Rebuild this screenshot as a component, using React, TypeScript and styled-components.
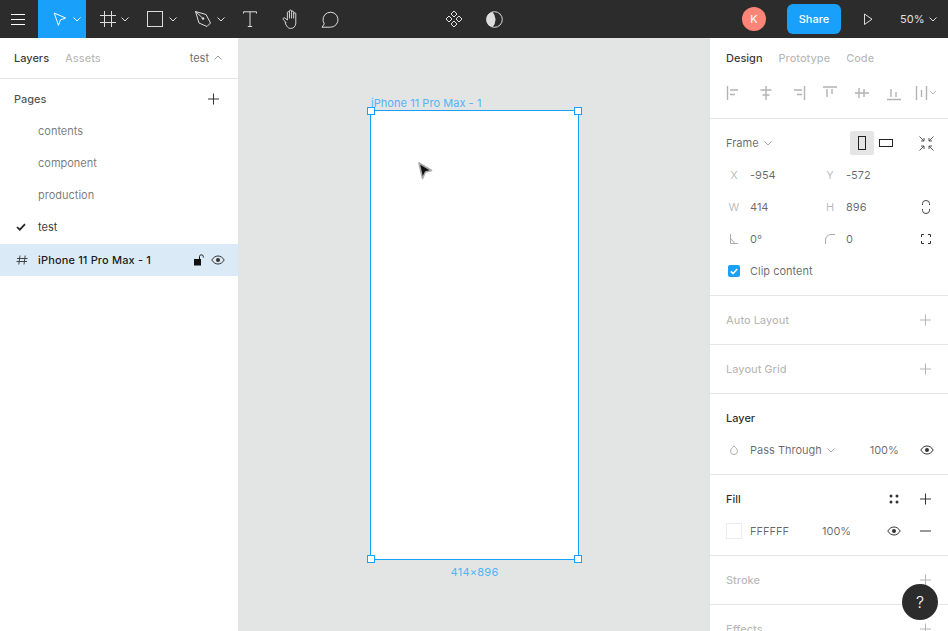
import React from "react";
import styled, { createGlobalStyle } from "styled-components";

const Global = createGlobalStyle`
  html, body { margin: 0; padding: 0; height: 100%; overflow: hidden; }
  body { font-family: Inter, "Liberation Sans", sans-serif; font-size: 11px; color: rgba(0,0,0,.8); }
  * { box-sizing: border-box; }
`;

const Page = styled.div`display:flex;flex-direction:column;width:948px;height:631px;overflow:hidden;position:relative;`;
const Toolbar = styled.header`display:flex;align-items:stretch;height:38px;flex:none;background:#2c2c2c;color:#fff;`;
const ToolSlot = styled.div<{ $w: number; $active?: boolean; $icon?: number; $gap?: number }>`
  width:${p => p.$w}px;flex:none;display:flex;align-items:center;justify-content:${p => (p.$icon ? "flex-start" : "center")};
  padding-left:${p => p.$icon ?? 0}px;gap:${p => p.$gap ?? 0}px;background:${p => (p.$active ? "#18a0fb" : "transparent")};
`;
const Spacer = styled.div<{ $w: number }>`width:${p => p.$w}px;flex:none;`;
const Avatar = styled.div`width:24px;height:24px;border-radius:50%;background:#fc8577;color:#fff;display:flex;align-items:center;justify-content:center;font-size:11px;align-self:center;`;
const ShareButton = styled.button`width:54px;height:30px;align-self:center;margin-left:21px;border:0;border-radius:6px;background:#18a0fb;color:#fff;font:500 11px Inter,sans-serif;padding:0;`;
const Zoom = styled.div`display:flex;align-items:center;gap:5px;color:#e0e0e0;font-size:11px;margin-left:5px;`;

const Body = styled.main`display:flex;flex:1;min-height:0;`;
const SidePanel = styled.aside`width:238px;flex:none;background:#fff;overflow:hidden;display:flex;flex-direction:column;`;
const Tabs = styled.div`display:flex;align-items:center;height:40px;flex:none;gap:16px;padding:0 16px 0 14px;`;
const LeftTabs = styled(Tabs)`height:41px;border-bottom:1px solid #e5e5e5;padding-bottom:1px;`;
const RightTabs = styled(Tabs)`padding-left:16px;`;
const Tab = styled.span<{ $on?: boolean }>`font-weight:500;color:${p => (p.$on ? "rgba(0,0,0,.8)" : "rgba(0,0,0,.3)")};`;
const PageName = styled.span`margin-left:auto;display:flex;align-items:center;gap:5px;color:rgba(0,0,0,.6);`;
const PagesHead = styled.div`display:flex;align-items:center;justify-content:space-between;height:24px;margin:8px 0 4px;padding:0 19px 0 14px;font-weight:500;color:rgba(0,0,0,.7);`;
const PageRow = styled.div<{ $current?: boolean }>`display:flex;align-items:center;height:32px;padding-left:16px;color:rgba(0,0,0,${p => (p.$current ? ".8" : ".55")});`;
const CheckSlot = styled.span`width:22px;flex:none;display:flex;align-items:center;`;
const LayerRow = styled.div`display:flex;align-items:center;height:32px;margin-top:1px;padding:0 13px 0 14px;background:#daebf7;font-weight:500;color:rgba(0,0,0,.9);`;
const LayerName = styled.span`margin-left:8px;flex:1;letter-spacing:.15px;`;
const LayerIcons = styled.span`display:flex;align-items:center;gap:7px;`;

const Canvas = styled.section`flex:1;background:#e3e5e4;position:relative;overflow:hidden;`;
const FrameBox = styled.div`position:absolute;left:132px;top:72px;width:209px;height:450px;background:#fff;border:1px solid #18a0fb;`;
const Handle = styled.i<{ $x: "left" | "right"; $y: "top" | "bottom" }>`position:absolute;${p => p.$x}:-4px;${p => p.$y}:-4px;width:8px;height:8px;background:#fff;border:1px solid #18a0fb;`;
const FrameLabel = styled.span`position:absolute;left:133px;top:59px;color:#4db5fb;font-size:11px;line-height:13px;letter-spacing:.05px;`;
const SizeLabel = styled.span`position:absolute;left:132px;width:209px;top:528px;text-align:center;color:#4db5fb;font-size:11px;line-height:13px;letter-spacing:.25px;`;
const Pointer = styled.svg`position:absolute;left:177px;top:121px;`;

const AlignRow = styled.div`display:flex;align-items:center;height:30px;padding-left:8px;flex:none;`;
const AlignSlot = styled.span`width:32px;display:flex;justify-content:center;align-items:center;`;
const Section = styled.div`flex:none;padding:8px 0;border-bottom:1px solid #e5e5e5;`;
const TopSection = styled(Section)`padding:0 0 10px;`;
const Row = styled.div`display:flex;align-items:center;height:32px;padding-left:16px;color:rgba(0,0,0,.6);white-space:nowrap;`;
const Title = styled.span<{ $on?: boolean }>`font-weight:500;color:${p => (p.$on ? "rgba(0,0,0,.85)" : "rgba(0,0,0,.3)")};flex:1;`;
const IconSlot = styled.span`width:16px;flex:none;display:flex;align-items:center;justify-content:center;`;
const EndSlot = styled(IconSlot)`margin-right:14px;`;
const PlusSlot = styled(EndSlot)`justify-content:flex-start;padding-left:2px;`;
const MidSlot = styled(IconSlot)`margin-right:16px;`;
const Pair = styled.span`width:96px;flex:none;display:flex;align-items:center;`;
const FieldLabel = styled.span`width:16px;margin-right:8px;text-align:center;color:rgba(0,0,0,.3);flex:none;display:flex;justify-content:center;`;
const FrameSelect = styled.span`display:flex;align-items:center;gap:5px;width:124px;`;
const Orient = styled.span<{ $on?: boolean }>`width:24px;height:24px;display:flex;align-items:center;justify-content:center;border-radius:2px;background:${p => (p.$on ? "#e5e5e5" : "transparent")};`;
const OrientGap = styled.span`width:20px;flex:none;`;
const Check = styled.span`width:12px;height:12px;margin:0 10px 0 2px;background:#18a0fb;border-radius:2px;display:flex;align-items:center;justify-content:center;`;
const Blend = styled.span`display:flex;align-items:center;gap:5px;flex:1;`;
const Percent = styled.span`width:64px;text-align:right;margin-right:20px;flex:none;`;
const Swatch = styled.span`width:16px;height:16px;margin-right:8px;border:1px solid #ededed;background:#fff;flex:none;`;
const Hex = styled.span`width:72px;flex:none;`;
const Opacity = styled.span`width:64px;flex:none;`;
const Help = styled.button`position:absolute;right:10px;bottom:11px;width:36px;height:36px;border-radius:50%;border:0;padding:0;background:#2c2c2c;color:#fff;font:300 16px Inter,sans-serif;`;
const Glyph = styled.svg`display:block;flex:none;`;

const S = ({ w = 16, h = 16, children, vb }: { w?: number; h?: number; vb?: string; children: React.ReactNode }) => (
  <Glyph width={w} height={h} viewBox={vb ?? `0 0 ${w} ${h}`} fill="none">{children}</Glyph>
);

const Chevron = ({ c = "#fff", up = false }: { c?: string; up?: boolean }) => (
  <S w={8} h={6}><path d={up ? "M.5 4.500 4 1l3.500 3.500" : "M.5 1.500 4 5l3.500-3.500"} stroke={c} /></S>
);
const Plus = ({ c = "#333" }: { c?: string }) => (
  <S w={11} h={12}><path d="M5.500 .5v11M0 6h11" stroke={c} /></S>
);
const Minus = () => (
  <S w={11} h={12}><path d="M0 6h11" stroke="#333" /></S>
);
const Eye = ({ c = "#333" }: { c?: string }) => (
  <S w={14} h={10}>
    <path d="M.8 5C2.400 2.400 4.500 1 7 1s4.600 1.400 6.200 4C11.600 7.600 9.500 9 7 9S2.400 7.600.8 5Z" stroke={c} />
    <circle cx="7" cy="5" r="2" fill={c} />
  </S>
);

const gray = "#b3b3b3";
const alignIcons = [
  <path key="a" d="M1.500 1v14M4 5h8M4 9.500h5" stroke={gray} strokeWidth="1.400" />,
  <path key="b" d="M8 1v14M2.500 5h11M4.500 10h7" stroke={gray} strokeWidth="1.400" />,
  <path key="c" d="M14.500 1v14M4 5h8M7 9.500h5" stroke={gray} strokeWidth="1.400" />,
  <path key="d" d="M1 2h14M5 4v8M10 4v5" stroke={gray} strokeWidth="1.400" />,
  <path key="e" d="M1 8h14M5 3v10M10 4v8" stroke={gray} strokeWidth="1.400" />,
  <path key="f" d="M1 14.500h14M5 4v8M10 7v5" stroke={gray} strokeWidth="1.400" />,
];

export default function App() {
  return (
    <Page>
      <Global />
      <Toolbar>
        <ToolSlot $w={38} $icon={11}>
          <S w={14} h={12}><path d="M0 1.500h14M0 6.500h14M0 11.500h14" stroke="#fff" /></S>
        </ToolSlot>
        <ToolSlot $w={48} $active $icon={15} $gap={6}>
          <S w={14} h={15}><path d="M1.200 1 12.600 6 7.500 7.800 5.500 13.400Z" stroke="#fff" strokeLinejoin="round" /></S>
          <Chevron />
        </ToolSlot>
        <ToolSlot $w={48} $icon={14} $gap={5}>
          <S><path d="M4.500 0v16M11.500 0v16M0 4.500h16M0 11.500h16" stroke="#ddd" /></S>
          <Chevron c="#ddd" />
        </ToolSlot>
        <ToolSlot $w={48} $icon={13} $gap={6}>
          <S><rect x=".5" y=".5" width="15" height="15" stroke="#ddd" /></S>
          <Chevron c="#ddd" />
        </ToolSlot>
        <ToolSlot $w={48} $icon={13} $gap={5}>
          <S w={17} h={17}>
            <path d="M.5.500 11 3.500 15.500 12 12 15.500 4 12Z" stroke="#ddd" strokeLinejoin="round" />
            <path d="M.5.500 7 6.500" stroke="#ddd" />
            <circle cx="8" cy="7.500" r="1.300" fill="#ddd" />
          </S>
          <Chevron c="#ddd" />
        </ToolSlot>
        <ToolSlot $w={40}>
          <S w={14} h={16}><path d="M.5 2.500V.8h13v1.700M7 .8v14.700M4.800 15.500h4.400" stroke="#ddd" /></S>
        </ToolSlot>
        <ToolSlot $w={40}>
          <S w={18} h={20} vb="0 0 15 19">
            <path d="M3.800 13 1.200 10c-.9-1.200.6-2.300 1.600-1.300L5 10.500V3.500c0-1.400 2-1.400 2 0V2c0-1.400 2-1.400 2 0v1c0-1.400 2-1.400 2 0v1.500c0-1.300 2-1.300 2 0v9c0 3-2.200 5-5 5-2.300 0-3.800-2-5.200-5.500ZM7 3.500V9M9 3v6M11 4v5" stroke="#ddd" strokeWidth=".9" strokeLinejoin="round" />
          </S>
        </ToolSlot>
        <ToolSlot $w={40}>
          <S w={18} h={18}>
            <path d="M1 17.200h8.500a7.500 7.500 0 1 0-6.200-3.300Z" stroke="#ddd" strokeLinejoin="round" />
          </S>
        </ToolSlot>
        <Spacer $w={84} />
        <ToolSlot $w={40}>
          <S w={18} h={18}>
            <path d="M9 1 12 4 9 7 6 4ZM4 6 7 9 4 12 1 9ZM14 6 17 9 14 12 11 9ZM9 11 12 14 9 17 6 14Z" stroke="#e0e0e0" />
          </S>
        </ToolSlot>
        <ToolSlot $w={40}>
          <S w={17} h={17}>
            <circle cx="8.500" cy="8.500" r="7.800" stroke="#ddd" />
            <path d="M6.500 .9A7.800 7.800 0 0 0 6.500 16.100 11 11 0 0 0 6.500.9Z" fill="#ddd" />
          </S>
        </ToolSlot>
        <Spacer $w={228} />
        <Avatar>K</Avatar>
        <ShareButton>Share</ShareButton>
        <ToolSlot $w={54}>
          <S w={10} h={12}><path d="M1.500 1v10.500L9 6.200Z" stroke="#ddd" strokeLinejoin="round" /></S>
        </ToolSlot>
        <Zoom>50%<Chevron c="#ddd" /></Zoom>
      </Toolbar>
      <Body>
        <SidePanel>
          <LeftTabs>
            <Tab $on>Layers</Tab>
            <Tab>Assets</Tab>
            <PageName>test <Chevron c="#999" up /></PageName>
          </LeftTabs>
          <PagesHead>Pages<Plus /></PagesHead>
          <PageRow><CheckSlot />contents</PageRow>
          <PageRow><CheckSlot />component</PageRow>
          <PageRow><CheckSlot />production</PageRow>
          <PageRow $current>
            <CheckSlot>
              <S w={10} h={8}><path d="M1 4l2.800 2.700L9 1.200" stroke="#222" strokeWidth="1.700" /></S>
            </CheckSlot>
            test
          </PageRow>
          <LayerRow>
            <S><path d="M6 3.500 4.800 12.500M11.200 3.500 10 12.500M3 6.500h10.500M2.500 9.500h10.500" stroke="#444" /></S>
            <LayerName>iPhone 11 Pro Max - 1</LayerName>
            <LayerIcons>
              <S w={10} h={12}>
                <path d="M0 5h7v6.500H0z" fill="#111" />
                <path d="M5.500 5V2.500C5.500 .3 9.300 .3 9.300 2.500V3.500" stroke="#111" />
              </S>
              <Eye />
            </LayerIcons>
          </LayerRow>
        </SidePanel>
        <Canvas>
          <FrameLabel>iPhone 11 Pro Max - 1</FrameLabel>
          <FrameBox>
            <Handle $x="left" $y="top" />
            <Handle $x="right" $y="top" />
            <Handle $x="left" $y="bottom" />
            <Handle $x="right" $y="bottom" />
          </FrameBox>
          <SizeLabel>414×896</SizeLabel>
          <Pointer width="20" height="22" viewBox="0 0 20 22" fill="none">
            <path d="M4 4 16.500 11.500 10.500 13 7.500 19.500Z" fill="#111" stroke="#aaa" strokeWidth="1.600" strokeLinejoin="round" />
          </Pointer>
        </Canvas>
        <SidePanel>
          <RightTabs>
            <Tab $on>Design</Tab>
            <Tab>Prototype</Tab>
            <Tab>Code</Tab>
          </RightTabs>
          <TopSection>
            <AlignRow>
              {alignIcons.map((icon, i) => (
                <AlignSlot key={i}><S>{icon}</S></AlignSlot>
              ))}
              <AlignSlot>
                <S w={22} h={16}>
                  <path d="M1.500 1v14M11.500 1v14M6.500 5v7" stroke={gray} strokeWidth="1.400" />
                  <path d="M15 6l3 3 3-3" stroke={gray} />
                </S>
              </AlignSlot>
            </AlignRow>
          </TopSection>
          <Section>
            <Row>
              <FrameSelect>Frame <Chevron c="#aaa" /></FrameSelect>
              <Orient $on><S w={8} h={14}><rect x=".5" y=".5" width="7" height="13" stroke="#222" /></S></Orient>
              <Orient><S w={14} h={8}><rect x=".5" y=".5" width="13" height="7" stroke="#222" /></S></Orient>
              <OrientGap />
              <EndSlot>
                <S w={15} h={15}>
                  <path d="M.5.500 5 5M5 2V5H2M14.500.500 10 5M10 2V5H13M.5 14.500 5 10M5 13V10H2M14.500 14.500 10 10M10 13V10H13" stroke="#444" strokeWidth=".9" />
                </S>
              </EndSlot>
            </Row>
            <Row>
              <Pair><FieldLabel>X</FieldLabel>-954</Pair>
              <Pair><FieldLabel>Y</FieldLabel>-572</Pair>
            </Row>
            <Row>
              <Pair><FieldLabel>W</FieldLabel>414</Pair>
              <Pair><FieldLabel>H</FieldLabel>896</Pair>
              <EndSlot>
                <S w={8} h={14}><path d="M.5 5V3.500a3.500 3 0 0 1 7 0V5M.5 9v1.500a3.500 3 0 0 0 7 0V9" stroke="#444" /></S>
              </EndSlot>
            </Row>
            <Row>
              <Pair>
                <FieldLabel><S w={8} h={10}><path d="M.5 0v9.500H8M.5 4.500 5 9.500" stroke="#aaa" /></S></FieldLabel>0°
              </Pair>
              <Pair>
                <FieldLabel><S w={10} h={10}><path d="M.5 10V6A5.500 5.500 0 0 1 6 .5h4" stroke="#aaa" /></S></FieldLabel>0
              </Pair>
              <EndSlot>
                <S w={10} h={10}><path d="M.5 3V.5H3M7 .5h2.500V3M9.500 7v2.500H7M3 9.500H.5V7" stroke="#333" /></S>
              </EndSlot>
            </Row>
            <Row>
              <Check><S w={8} h={7}><path d="M.8 3.400 3 5.600 7.200 1" stroke="#fff" strokeWidth="1.500" /></S></Check>
              Clip content
            </Row>
          </Section>
          <Section>
            <Row><Title>Auto Layout</Title><PlusSlot><Plus c="#b3b3b3" /></PlusSlot></Row>
          </Section>
          <Section>
            <Row><Title>Layout Grid</Title><PlusSlot><Plus c="#b3b3b3" /></PlusSlot></Row>
          </Section>
          <Section>
            <Row><Title $on>Layer</Title></Row>
            <Row>
              <FieldLabel>
                <S w={8} h={10}><path d="M4 .8C5.800 3 7.500 4.500 7.500 6.200a3.500 3.300 0 0 1-7 0C.5 4.500 2.200 3 4 .8Z" stroke="#aaa" /></S>
              </FieldLabel>
              <Blend>Pass Through <Chevron c="#aaa" /></Blend>
              <Percent>100%</Percent>
              <EndSlot><Eye /></EndSlot>
            </Row>
          </Section>
          <Section>
            <Row>
              <Title $on>Fill</Title>
              <MidSlot>
                <S w={10} h={10}>
                  <circle cx="2" cy="2" r="1.500" fill="#333" /><circle cx="8" cy="2" r="1.500" fill="#333" />
                  <circle cx="2" cy="8" r="1.500" fill="#333" /><circle cx="8" cy="8" r="1.500" fill="#333" />
                </S>
              </MidSlot>
              <PlusSlot><Plus /></PlusSlot>
            </Row>
            <Row>
              <Swatch />
              <Hex>FFFFFF</Hex>
              <Opacity>100%</Opacity>
              <MidSlot><Eye /></MidSlot>
              <PlusSlot><Minus /></PlusSlot>
            </Row>
          </Section>
          <Section>
            <Row><Title>Stroke</Title><PlusSlot><Plus c="#b3b3b3" /></PlusSlot></Row>
          </Section>
          <Section>
            <Row><Title>Effects</Title><PlusSlot><Plus c="#b3b3b3" /></PlusSlot></Row>
          </Section>
        </SidePanel>
      </Body>
      <Help>?</Help>
    </Page>
  );
}
